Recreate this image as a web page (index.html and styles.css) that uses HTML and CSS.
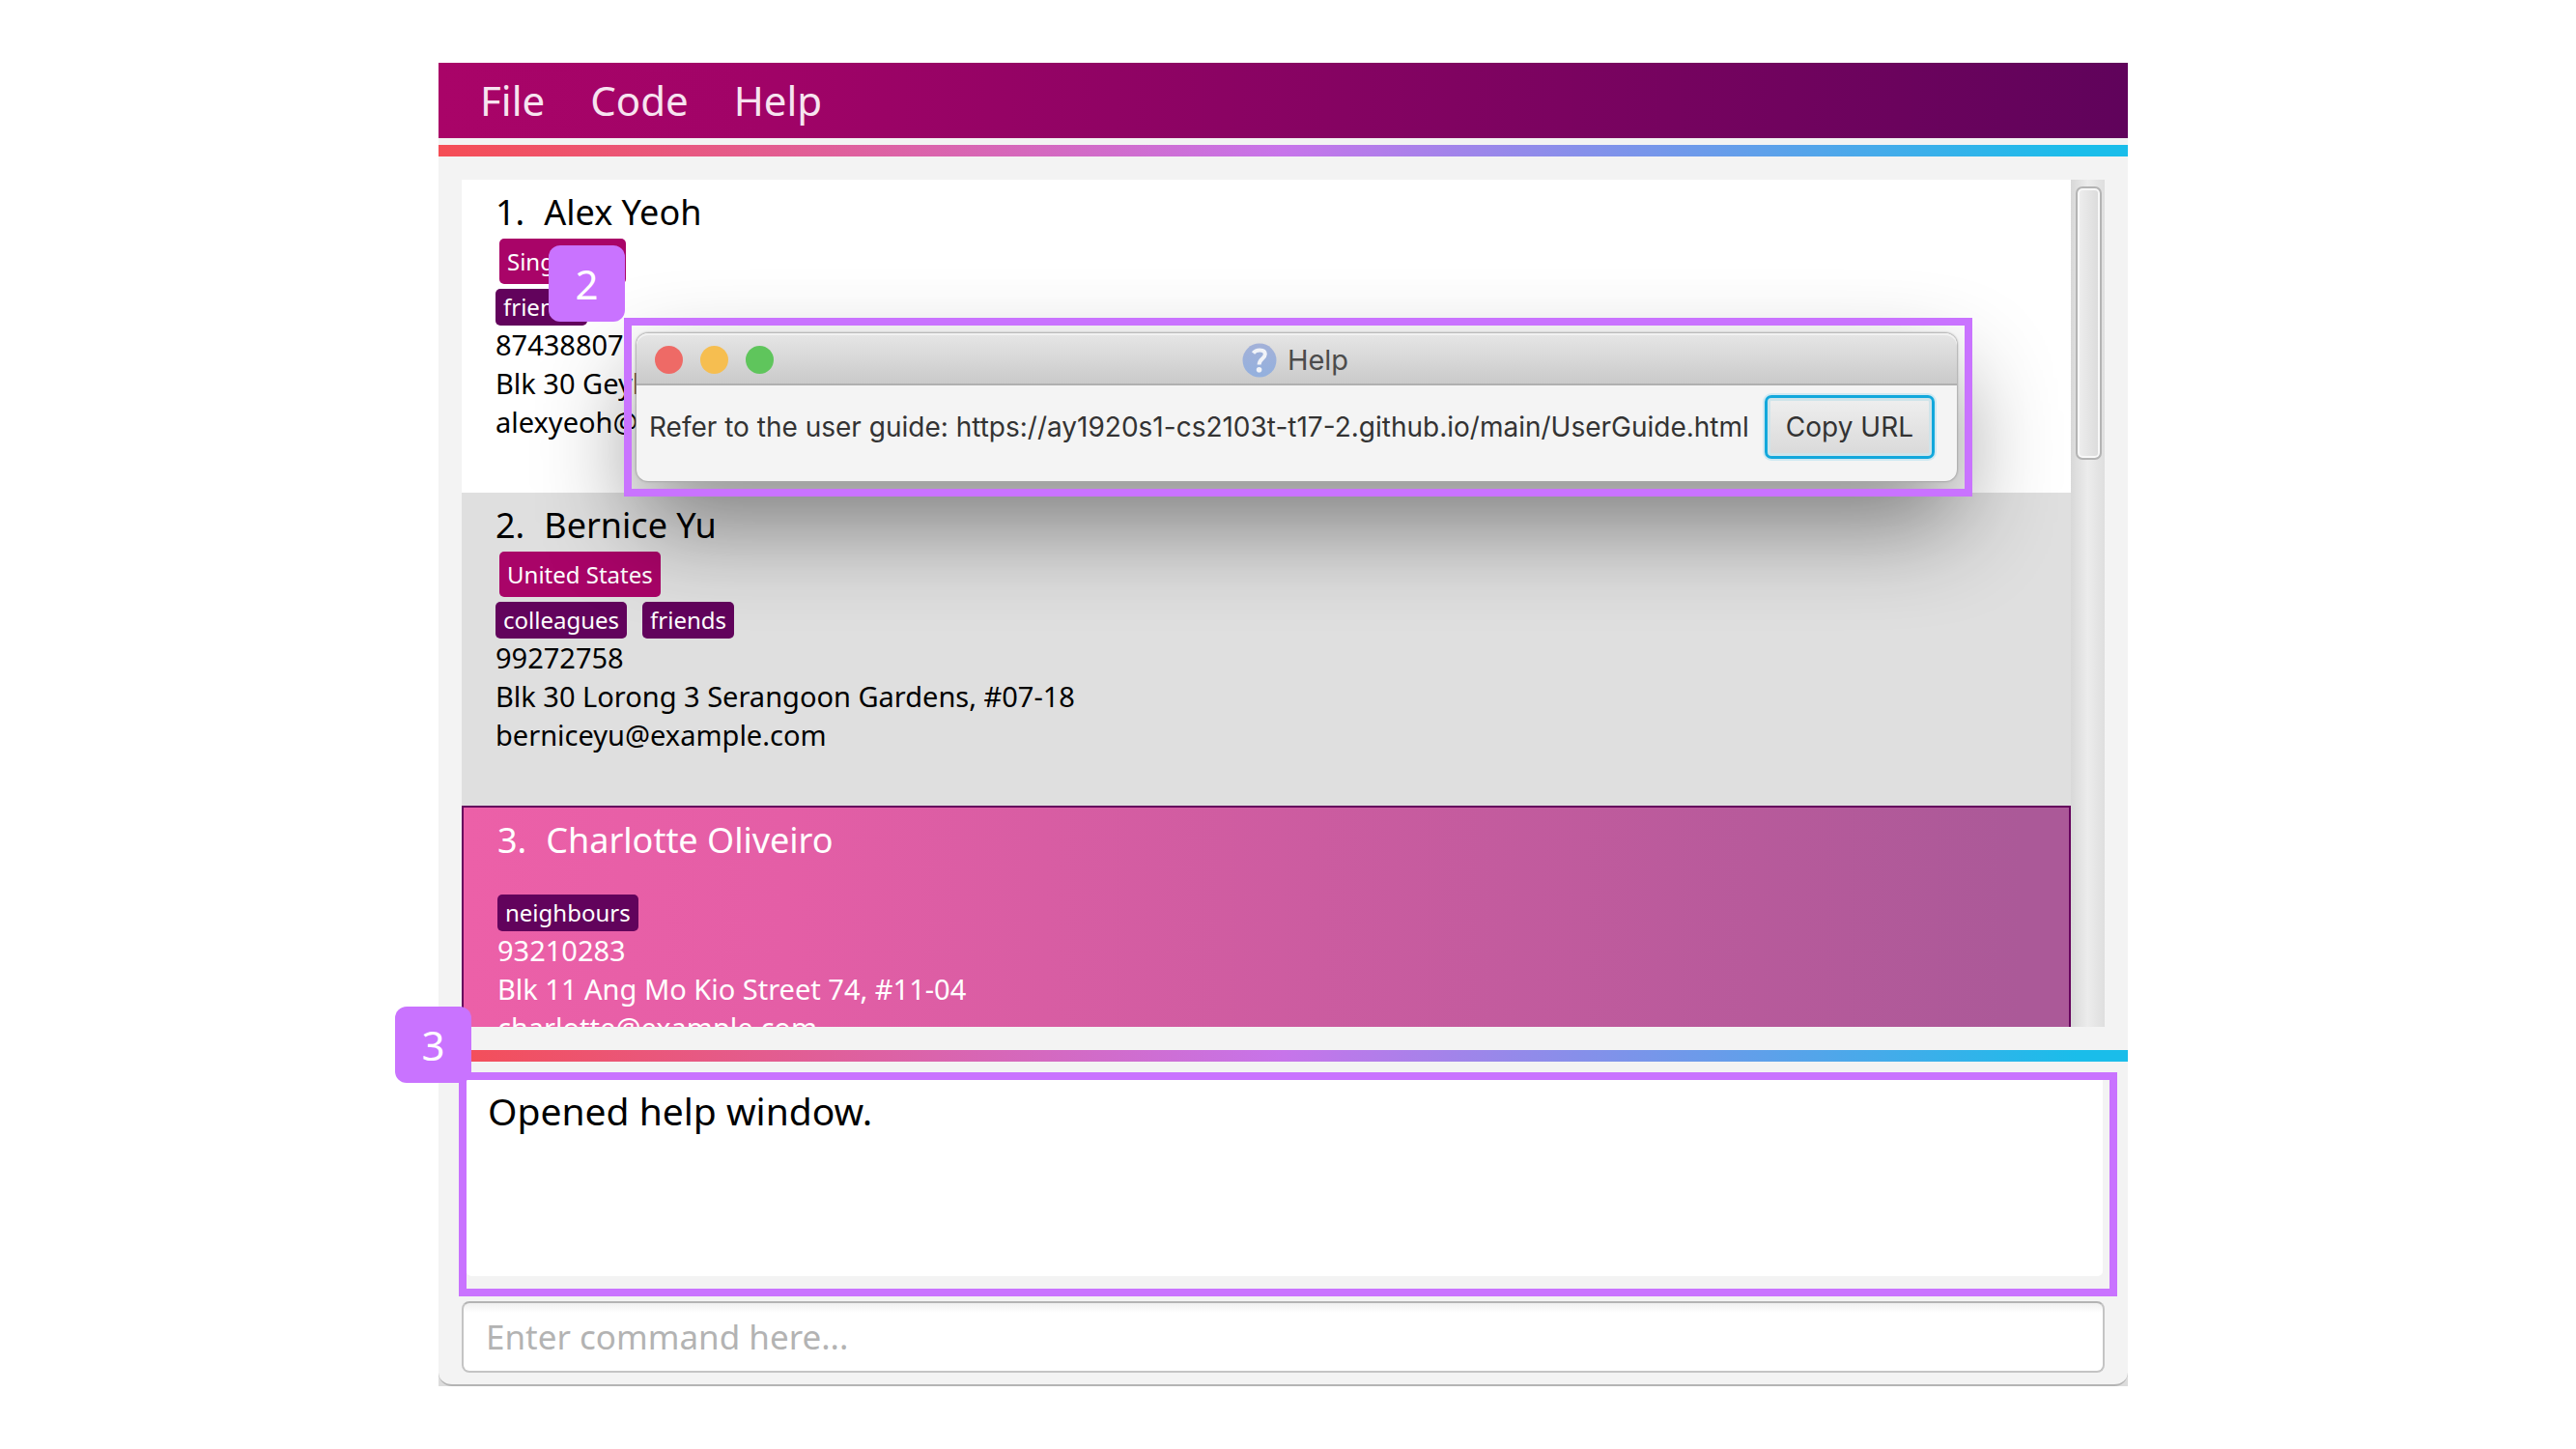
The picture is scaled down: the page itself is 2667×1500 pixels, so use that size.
FILE: index.html
```html
<!DOCTYPE html>
<html lang="en">
<head>
<meta charset="utf-8">
<title>Address Book</title>
<link rel="stylesheet" href="styles.css">
</head>
<body>
<main class="app">
  <div class="surface">
    <nav class="menubar" aria-label="Main menu">
      <button class="menu" type="button">File</button>
      <button class="menu" type="button">Code</button>
      <button class="menu" type="button">Help</button>
    </nav>
    <div class="stripe stripe-top"></div>

    <section class="people" aria-label="Persons">
      <ol class="list">
        <li class="person">
          <h2 class="name"><span>1.</span><span>Alex Yeoh</span></h2>
          <p class="country">Singapore</p>
          <div class="tags"><span class="tag">friends</span></div>
          <p class="detail">87438807</p>
          <p class="detail">Blk 30 Geylang Street 29, #06-40</p>
          <p class="detail">alexyeoh@example.com</p>
        </li>
        <li class="person person-even">
          <h2 class="name"><span>2.</span><span>Bernice Yu</span></h2>
          <p class="country">United States</p>
          <div class="tags"><span class="tag">colleagues</span><span class="tag">friends</span></div>
          <p class="detail">99272758</p>
          <p class="detail">Blk 30 Lorong 3 Serangoon Gardens, #07-18</p>
          <p class="detail">berniceyu@example.com</p>
        </li>
        <li class="person person-selected">
          <h2 class="name"><span>3.</span><span>Charlotte Oliveiro</span></h2>
          <p class="country country-empty"></p>
          <div class="tags"><span class="tag">neighbours</span></div>
          <p class="detail">93210283</p>
          <p class="detail">Blk 11 Ang Mo Kio Street 74, #11-04</p>
          <p class="detail">charlotte@example.com</p>
        </li>
      </ol>
      <div class="scrollbar"><div class="thumb"></div></div>
    </section>

    <div class="stripe"></div>

    <section class="result">
      <span class="badge badge-result">3</span>
      <output class="message">Opened help window.</output>
    </section>

    <input class="command" type="text" placeholder="Enter command here..." aria-label="Command">
  </div>

  <section class="callout">
    <span class="badge badge-help">2</span>
    <div class="dialog" role="dialog" aria-labelledby="help-title">
      <header class="titlebar">
        <div class="lights"><i class="light red"></i><i class="light amber"></i><i class="light green"></i></div>
        <div class="title">
          <svg class="help-icon" viewBox="0 0 36 36" aria-hidden="true">
            <defs><linearGradient id="orb" x1="0" y1="0" x2="0" y2="1"><stop offset="0" stop-color="#a3b1d8"/><stop offset="1" stop-color="#93b0de"/></linearGradient></defs>
            <circle cx="18" cy="18" r="17.500" fill="url(#orb)"/>
            <path d="M11.500 10.500C13.200 8.200 15.400 7.400 18.300 7.400C21.800 7.400 23.800 9 23.800 11.800C23.800 16.200 17.600 16.600 17.600 22.400" fill="none" stroke="#f1f3f8" stroke-width="4"/>
            <circle cx="17.600" cy="27.700" r="2.800" fill="#f1f3f8"/>
          </svg>
          <span id="help-title">Help</span>
        </div>
      </header>
      <div class="dialog-body">
        <span class="guide">Refer to the user guide: https://ay1920s1-cs2103t-t17-2.github.io/main/UserGuide.html</span>
        <button class="copy" type="button">Copy URL</button>
      </div>
    </div>
  </section>
</main>
</body>
</html>
```
FILE: styles.css
```css
* { box-sizing: border-box; margin: 0; }
body {
  padding: 65px 464px 65px 454px;
  background: #fff;
  color: #000;
  font-family: "Noto Sans", "Open Sans", sans-serif;
}
button, input { font: inherit; }

.app { position: relative; height: calc(100vh - 130px); background: #dcdcdc; }
.surface {
  display: flex;
  flex-direction: column;
  height: 100%;
  padding-bottom: 12px;
  border-bottom: 2px solid #b4b4b4;
  border-radius: 0 0 14px 14px;
  background: #f3f3f3;
}

.menubar {
  display: flex;
  flex: none;
  align-items: center;
  gap: 47px;
  height: 78px;
  padding: 0 43px;
  background: linear-gradient(90deg, #a90468, #a00367 20%, #60035b);
}
.menu { padding: 0; border: 0; background: none; color: #f7e4f0; font-size: 42px; line-height: 58px; }

.stripe {
  flex: none;
  height: 12px;
  background: linear-gradient(90deg, #f54d55, #c774ea 50%, #1abdea 97%);
}
.stripe-top { margin-top: 7px; }

.people { display: flex; flex: 1; min-height: 0; margin: 24px; }
.list { flex: 1; padding: 0; overflow: hidden; list-style: none; background: #fff; }
.person { height: 324px; padding: 11px 35px; }
.person-even { background: #dfdfdf; }
.person-selected {
  border: 2px solid #65035d;
  background: linear-gradient(90deg, #ec60a8, #e45ea6 20%, #ab5998 97%);
  color: #fff;
}
.name { display: flex; gap: 20px; font-size: 36px; font-weight: 400; line-height: 46px; }
.country {
  width: fit-content;
  margin: 4px 4px 5px;
  padding: 0 8px;
  border-radius: 5px;
  background: #a90468;
  color: #fff;
  font-size: 24px;
  line-height: 47px;
}
.country-empty { height: 24px; padding: 0; }
.tags { display: flex; gap: 16px; }
.tag { padding: 0 8px; border-radius: 5px; background: #62035c; color: #fff; font-size: 24px; line-height: 38px; }
.detail { font-size: 29px; line-height: 40px; white-space: nowrap; }

.scrollbar {
  width: 35px;
  padding: 7px 3px 0 5px;
  background: linear-gradient(90deg, #d8d8d8, #ececec 50%, #dedede);
}
.thumb {
  height: 283px;
  border: 2px solid #b4b4b4;
  border-radius: 7px;
  background: linear-gradient(90deg, #efefef, #dadada);
  box-shadow: inset 0 0 0 2px #f8f8f8;
}

.result {
  position: relative;
  flex: none;
  height: 232px;
  margin: 11px 11px 5px 21px;
  padding: 0 7px 13px 0;
  border: 8px solid #c973ff;
}
.message {
  display: block;
  height: 100%;
  padding: 5px 22px;
  border-radius: 0 0 5px 5px;
  background: #fff;
  font-size: 39px;
  line-height: 54px;
}
.command {
  flex: none;
  height: 74px;
  margin: 0 24px;
  padding: 0 23px 2px;
  border: 2px solid #c4c4c4;
  border-top-color: #b4b4b4;
  border-radius: 8px;
  background: linear-gradient(#f0f0f0, #fff 10px);
  font-size: 35px;
}
.command::placeholder { color: #b3b3b3; opacity: 1; }

.badge {
  position: absolute;
  z-index: 1;
  width: 79px;
  border-radius: 12px;
  background: #c973ff;
  color: #fff;
  font-size: 42px;
  line-height: 79px;
  text-align: center;
}
.badge-result { left: -74px; top: -76px; }
.badge-help { left: -78px; top: -75px; }

.callout {
  position: absolute;
  top: 264px;
  left: 192px;
  right: 161px;
  padding: 16px 16px 16px 13px;
}
/* The frame is painted over the dialog's shadow so its colour stays even. */
.callout::after {
  content: "";
  position: absolute;
  inset: 0;
  border: 8px solid #c973ff;
  pointer-events: none;
}
.dialog {
  border-radius: 12px;
  background: #f4f4f4;
  box-shadow: 0 0 2px 1px #a8a8a8, 0 44px 100px rgba(0, 0, 0, 0.45);
  color: #333;
  font-family: "Inter", "Liberation Sans", sans-serif;
}
.titlebar {
  display: grid;
  grid-template-columns: 1fr auto 1fr;
  align-items: center;
  height: 54px;
  padding: 3px 22px 0 19px;
  border-bottom: 2px solid #b0b0b0;
  border-radius: 12px 12px 0 0;
  background: linear-gradient(#e6e6e6, #cacaca);
  box-shadow: inset 0 2px #f2f2f2;
}
.lights { display: flex; gap: 18px; }
.light { width: 29px; height: 29px; border-radius: 50%; }
.red { background: #ee6a66; }
.amber { background: #f6be50; }
.green { background: #5fc55c; }
.title { display: flex; align-items: center; gap: 11px; color: #4c4c4c; font-size: 29px; line-height: 36px; }
.help-icon { width: 36px; height: 36px; }
.dialog-body {
  display: flex;
  align-items: center;
  justify-content: space-between;
  padding: 10px 23px 23px 13px;
  font-size: 28px;
  white-space: nowrap;
}
.copy {
  height: 66px;
  padding: 0 19px;
  border: 3px solid #12a8dc;
  border-radius: 7px;
  background: linear-gradient(#efefef, #d9d9d9);
  box-shadow: 0 0 0 2px #d0e9f2, inset 0 0 0 3px #cfe4ea;
  color: #333;
}
```
